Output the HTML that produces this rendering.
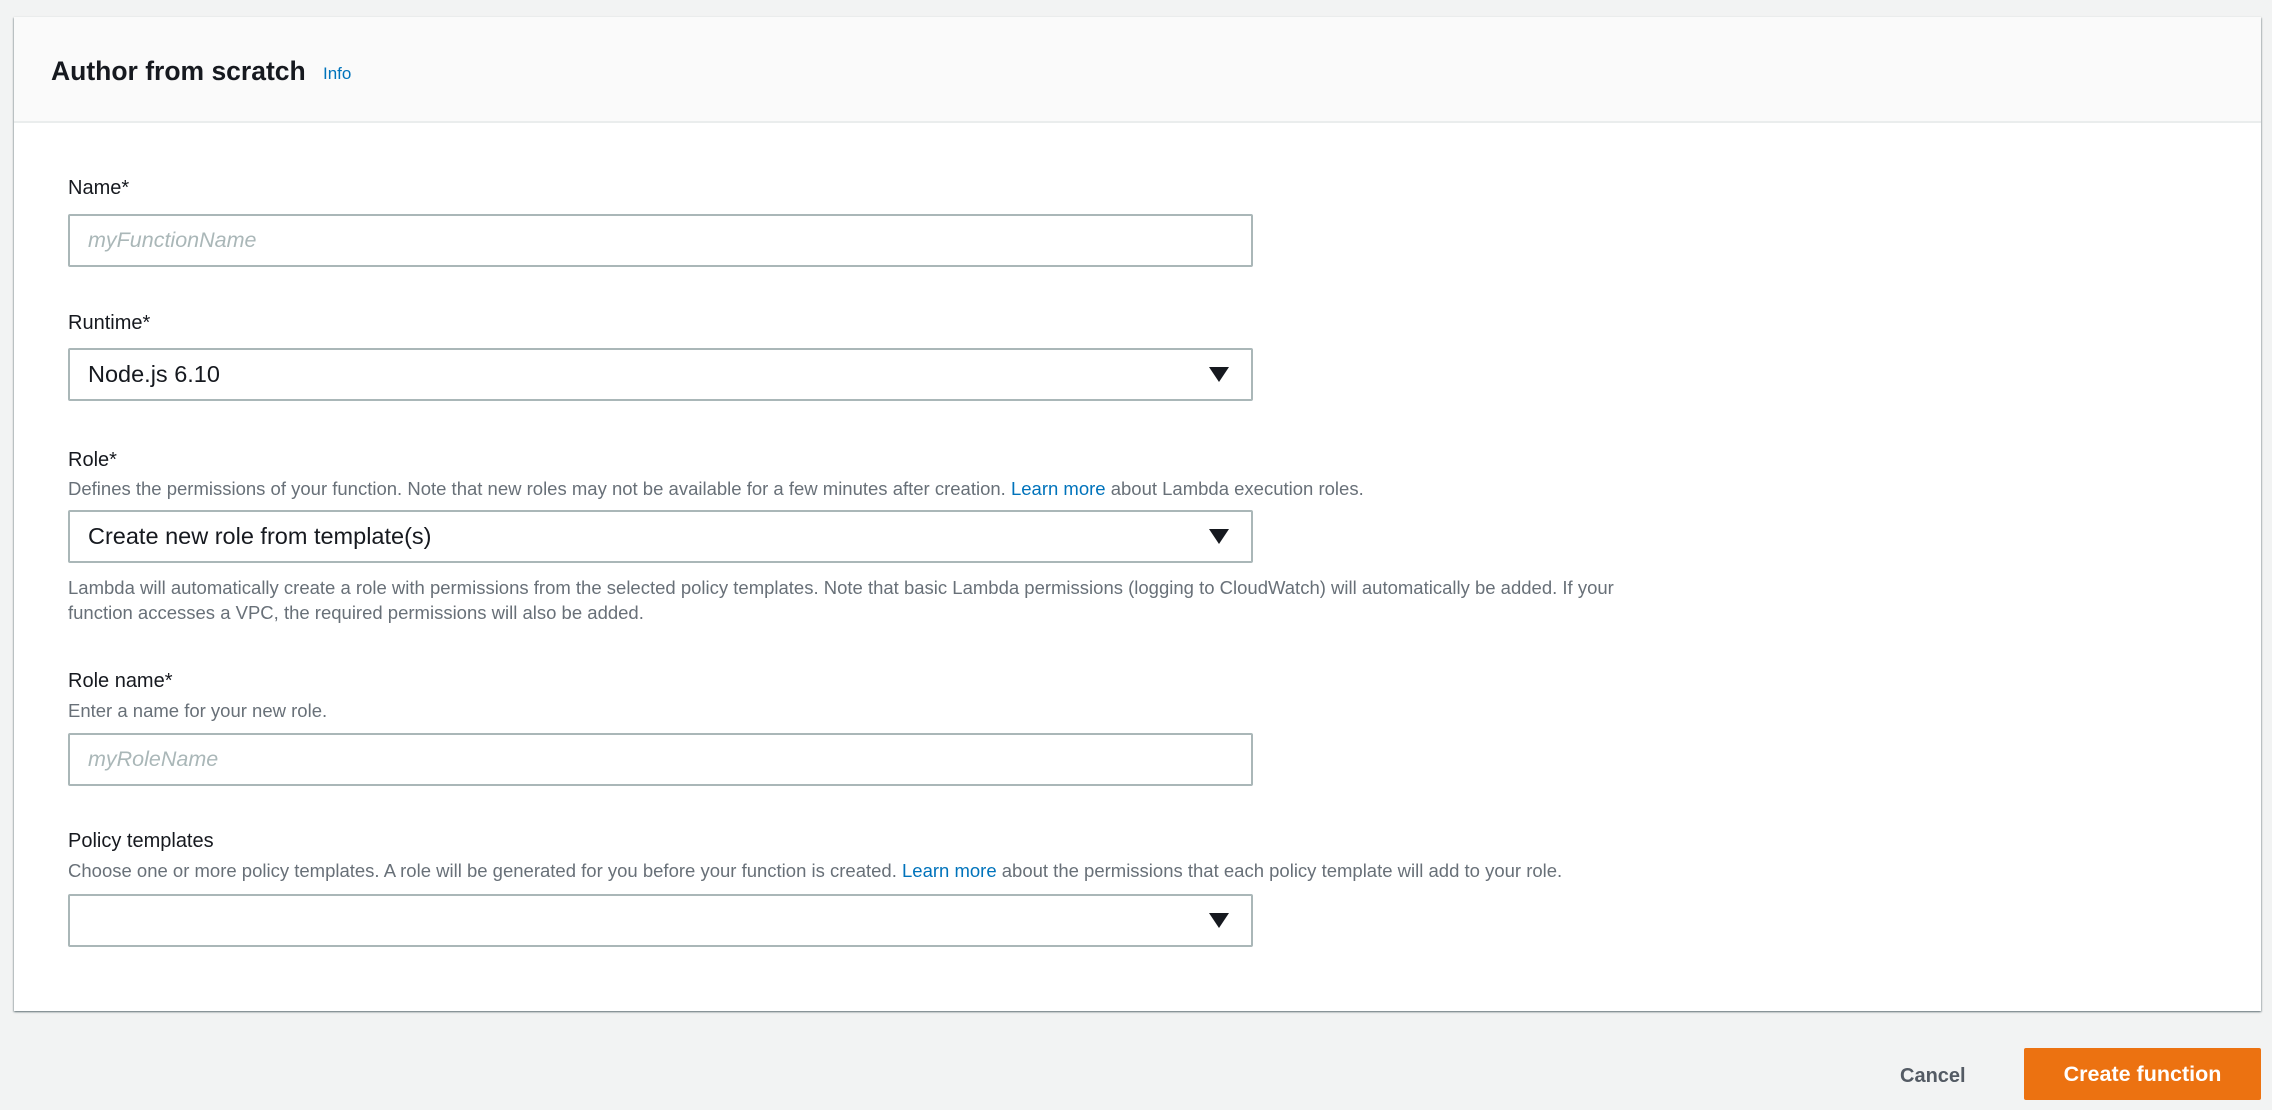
<!DOCTYPE html>
<html><head><meta charset="utf-8"><style>
*{box-sizing:border-box;margin:0;padding:0}
body{width:2272px;height:1110px;background:#f2f3f3;font-family:"Liberation Sans",Arial,sans-serif;position:relative;overflow:hidden;color:#16191f}
.card{position:absolute;left:14px;top:17px;width:2247px;height:994px;background:#fff;box-shadow:0 1px 2px 0 rgba(0,28,36,.4),1px 1px 1px 0 rgba(0,28,36,.15),-1px 1px 1px 0 rgba(0,28,36,.15)}
.hdr{position:absolute;left:0;top:0;right:0;height:106px;background:#fafafa;border-bottom:2px solid #eaeded}
.title{position:absolute;left:37px;top:39px;font-size:26.5px;font-weight:bold;color:#16191f}
.info{position:absolute;left:309px;top:47px;font-size:17px;color:#0073bb}
.a{position:absolute;left:68px}
.lbl{font-size:20px;color:#16191f}
.desc{font-size:18.5px;color:#687078;white-space:nowrap}
.desc b{font-weight:normal;color:#0073bb}
.box{position:absolute;left:68px;width:1185px;height:53px;border:2px solid #aab7b8;border-radius:2px;background:#fff;font-size:23.5px;line-height:49px;padding-left:18px}
.ph{color:#aab7b8;font-style:italic;font-size:21.5px}
.arr{position:absolute;right:22px;top:17px;width:0;height:0;border-left:10px solid transparent;border-right:10px solid transparent;border-top:15px solid #16191f}
.cancel{position:absolute;left:1900px;top:1065px;font-size:20px;font-weight:bold;color:#545b64}
.btn{position:absolute;left:2024px;top:1048px;width:237px;height:52px;background:#ec7211;border-radius:2px;color:#fff;font-size:21.5px;font-weight:bold;text-align:center;line-height:52px}
</style></head><body>
<div class="card"><div class="hdr"><div class="title">Author from scratch</div><div class="info">Info</div></div></div>
<div class="a lbl" style="top:177px">Name*</div>
<div class="box ph" style="top:214px">myFunctionName</div>
<div class="a lbl" style="top:312px">Runtime*</div>
<div class="box" style="top:348px">Node.js 6.10<span class="arr"></span></div>
<div class="a lbl" style="top:449px">Role*</div>
<div class="a desc" style="top:478px">Defines the permissions of your function. Note that new roles may not be available for a few minutes after creation. <b>Learn more</b> about Lambda execution roles.</div>
<div class="box" style="top:510px">Create new role from template(s)<span class="arr"></span></div>
<div class="a desc" style="top:575px;line-height:25px">Lambda will automatically create a role with permissions from the selected policy templates. Note that basic Lambda permissions (logging to CloudWatch) will automatically be added. If your<br>function accesses a VPC, the required permissions will also be added.</div>
<div class="a lbl" style="top:670px">Role name*</div>
<div class="a desc" style="top:700px">Enter a name for your new role.</div>
<div class="box ph" style="top:733px">myRoleName</div>
<div class="a lbl" style="top:830px">Policy templates</div>
<div class="a desc" style="top:860px">Choose one or more policy templates. A role will be generated for you before your function is created. <b>Learn more</b> about the permissions that each policy template will add to your role.</div>
<div class="box" style="top:894px"><span class="arr"></span></div>
<div class="cancel">Cancel</div>
<div class="btn">Create function</div>
</body></html>
